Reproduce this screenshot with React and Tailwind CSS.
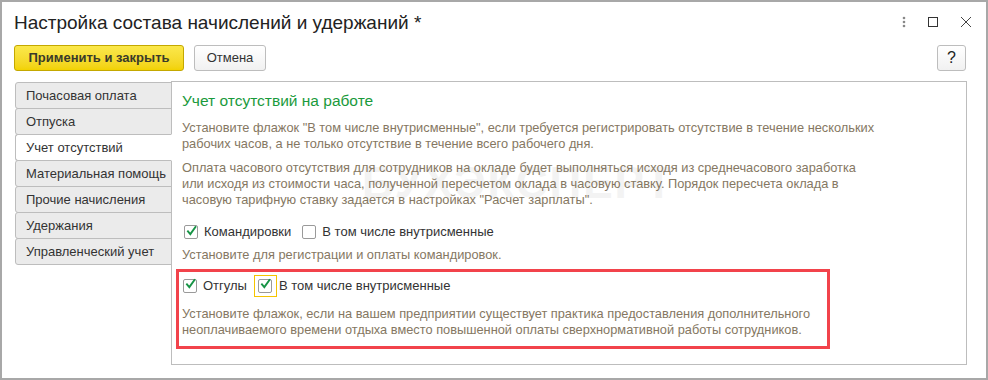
import React from 'react';

const tabs = [
  'Почасовая оплата',
  'Отпуска',
  'Учет отсутствий',
  'Материальная помощь',
  'Прочие начисления',
  'Удержания',
  'Управленческий учет',
];

function Check({ checked }) {
  return (
    <span className="w-[14px] h-[14px] border border-[#9a9a9a] rounded-[2px] bg-white flex items-center justify-center shrink-0">
      {checked && (
        <svg width="14" height="14" viewBox="0 0 14 14" className="-mt-[3px] ml-[1px]">
          <path d="M2.5 7.5 L5.5 11 L12 2" fill="none" stroke="#179446" strokeWidth="2.4" strokeLinecap="square" />
        </svg>
      )}
    </span>
  );
}

export default function App() {
  return (
    <div className="relative w-[988px] h-[380px] bg-white border-2 border-[#a8a8a8] font-['Arial','Liberation_Sans',sans-serif] text-[#333] overflow-hidden">
      {/* Title bar */}
      <div className="flex items-center h-[40px] pl-[12px] pr-[14px]">
        <h1 className="text-[19px] text-[#222] flex-1 pt-[3px]">Настройка состава начислений и удержаний *</h1>
        <div className="flex items-center gap-[22px] text-[#555]">
          <svg width="4" height="12" viewBox="0 0 4 12"><circle cx="2" cy="2" r="1.3" fill="#888" /><circle cx="2" cy="6" r="1.3" fill="#888" /><circle cx="2" cy="10" r="1.3" fill="#888" /></svg>
          <span className="w-[10px] h-[10px] border border-[#333]" />
          <svg width="12" height="12" viewBox="0 0 12 12"><path d="M1 1 L11 11 M11 1 L1 11" stroke="#444" strokeWidth="1" /></svg>
        </div>
      </div>

      {/* Command bar */}
      <div className="flex items-center h-[26px] mt-[3px] pl-[12px] pr-[20px]">
        <button className="h-[26px] w-[170px] rounded-[3px] border border-[#c4a800] bg-gradient-to-b from-[#fbe84a] to-[#f2d200] text-[13px] font-bold text-[#3a3a2a]">
          Применить и закрыть
        </button>
        <button className="h-[26px] w-[72px] ml-[10px] rounded-[3px] border border-[#bdbdbd] bg-gradient-to-b from-white to-[#f1f1f1] text-[13px] text-[#333]">
          Отмена
        </button>
        <div className="flex-1" />
        <button className="h-[26px] w-[29px] rounded-[3px] border border-[#bdbdbd] bg-gradient-to-b from-white to-[#f1f1f1] text-[16px] text-[#222]">
          ?
        </button>
      </div>

      {/* Body */}
      <div className="flex mt-[10px] pl-[13px]">
        <div className="w-[157px] pt-[1px] flex flex-col">
          {tabs.map((t, i) => (
            <div
              key={t}
              className={
                i === 2
                  ? 'relative z-10 h-[27px] -mt-px first:mt-0 flex items-center pl-[10px] text-[13px] text-[#333] bg-white border border-[#bdbdbd] border-r-white rounded-l-[3px]'
                  : 'h-[27px] -mt-px first:mt-0 flex items-center pl-[10px] text-[13px] text-[#333] bg-[#ebebeb] border border-[#bdbdbd] rounded-l-[3px]'
              }
            >
              {t}
            </div>
          ))}
        </div>

        <div className="relative -ml-px w-[796px] h-[284px] border border-[#bdbdbd] pl-[10px] pt-[9px]">
          <div className="absolute left-[190px] top-[68px] text-[44px] font-bold text-[#f3f3f3] tracking-[2px] select-none">
            БУХЭКСПЕРТ
          </div>
          <div className="relative">
            <h2 className="text-[15.5px] text-[#1a9a3c] leading-[20px]">Учет отсутствий на работе</h2>
            <p className="mt-[9px] text-[12.8px] leading-[16px] text-[#857762] w-[696px]">
              Установите флажок "В том числе внутрисменные", если требуется регистрировать отсутствие в течение нескольких рабочих часов, а не только отсутствие в течение всего рабочего дня.
            </p>
            <p className="mt-[8px] text-[12.8px] leading-[16px] text-[#857762] w-[696px]">
              Оплата часового отсутствия для сотрудников на окладе будет выполняться исходя из среднечасового заработка или исходя из стоимости часа, полученной пересчетом оклада в часовую ставку. Порядок пересчета оклада в часовую тарифную ставку задается в настройках "Расчет зарплаты".
            </p>

            <div className="flex items-center mt-[14px] h-[20px] pl-[2px]">
              <Check checked />
              <span className="ml-[6px] text-[13px] text-[#333]">Командировки</span>
              <span className="ml-[11px]"><Check /></span>
              <span className="ml-[6px] text-[13px] text-[#333]">В том числе внутрисменные</span>
            </div>
            <p className="mt-[5px] text-[12.8px] leading-[16px] text-[#857762]">
              Установите для регистрации и оплаты командировок.
            </p>

            <div className="-ml-[6px] mt-[6px] w-[654px] border-[3px] border-[#f2434b] pl-[3px] pt-[2px] pb-[8px]">
              <div className="flex items-center h-[23px] pl-[1px]">
                <Check checked />
                <span className="ml-[6px] text-[13px] text-[#333]">Отгулы</span>
                <span className="ml-[7px] w-[23px] h-[22px] border border-[#f5c400] flex items-center justify-center">
                  <Check checked />
                </span>
                <span className="ml-[2px] text-[13px] text-[#333]">В том числе внутрисменные</span>
              </div>
              <p className="mt-[9px] text-[12.8px] leading-[16px] text-[#857762] w-[640px]">
                Установите флажок, если на вашем предприятии существует практика предоставления дополнительного неоплачиваемого времени отдыха вместо повышенной оплаты сверхнормативной работы сотрудников.
              </p>
            </div>
          </div>
        </div>
      </div>
    </div>
  );
}
